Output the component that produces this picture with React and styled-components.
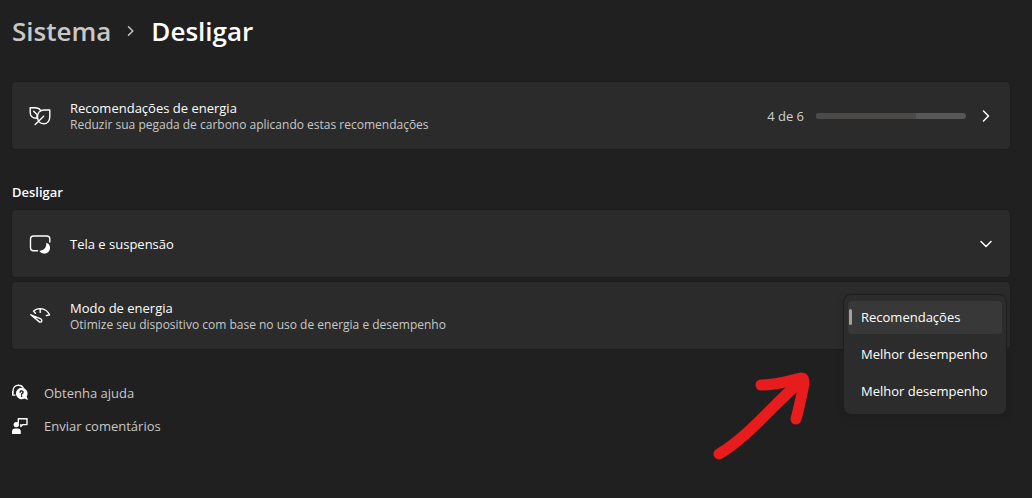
import React from "react"
import styled, { createGlobalStyle } from "styled-components"

const App = () => (
  <>
    <GlobalStyle />
    <Page>
      <Breadcrumb aria-label="Breadcrumb">
        <ParentLink href="#sistema">Sistema</ParentLink>
        <Chevron width="8" height="12" viewBox="0 0 8 12" $color="#c4c4c4">
          <path d="M1.500 1.700 5.800 6 1.500 10.300" />
        </Chevron>
        <Title>Desligar</Title>
      </Breadcrumb>

      <CardButton type="button">
        <LeafIcon />
        <CardText>
          <CardTitle>Recomendações de energia</CardTitle>
          <CardCaption>
            Reduzir sua pegada de carbono aplicando estas recomendações
          </CardCaption>
        </CardText>
        <Count>4 de 6</Count>
        <Track>
          <Fill style={{ width: `${(4 / 6) * 100}%` }} />
        </Track>
        <Chevron width="12" height="12" viewBox="0 0 12 12" $color="#ffffff">
          <path d="M3.500 1 8.500 6 3.500 11" />
        </Chevron>
      </CardButton>

      <SectionTitle>Desligar</SectionTitle>
      <CardList>
        <CardButton type="button" aria-expanded="false">
          <ScreenIcon />
          <CardText>
            <CardTitle>Tela e suspensão</CardTitle>
          </CardText>
          <Chevron width="12" height="12" viewBox="0 0 12 12" $color="#ffffff">
            <path d="M1 3.500 6 8.500 11 3.500" />
          </Chevron>
        </CardButton>
        <Card>
          <GaugeIcon />
          <CardText>
            <CardTitle id="power-mode">Modo de energia</CardTitle>
            <CardCaption>
              Otimize seu dispositivo com base no uso de energia e desempenho
            </CardCaption>
          </CardText>
          <Menu role="listbox" aria-labelledby="power-mode">
            <MenuItem type="button" role="option" aria-selected="true" $selected>
              Recomendações
            </MenuItem>
            <MenuItem type="button" role="option" aria-selected="false">
              Melhor desempenho
            </MenuItem>
            <MenuItem type="button" role="option" aria-selected="false">
              Melhor desempenho
            </MenuItem>
            <Arrow width="98" height="90" viewBox="0 0 98 90" aria-hidden="true">
              <path d="M6 83C36 65 60 34 90 8M48 14C64 14 75 10 88 7C92 7 91 12 90 18C88 26 87 34 83 48" />
            </Arrow>
          </Menu>
        </Card>
      </CardList>

      <Links>
        <HelpLink href="#ajuda">
          <HelpIcon />
          Obtenha ajuda
        </HelpLink>
        <HelpLink href="#comentarios">
          <FeedbackIcon />
          Enviar comentários
        </HelpLink>
      </Links>
    </Page>
  </>
)

export default App

const LeafIcon = () => (
  <Icon width="22" height="20" viewBox="0 0 22 20">
    <path d="M7.500 12.300C3.500 12.200 1.200 9.800 1.200 6.300V1.700H6c2.700 0 4.400.8 5.300 2.500" />
    <path d="M4.700 5.200 8 8.400V12" />
    <path d="M6.200 18.600 14.700 10.200" />
    <path d="M9.400 14.800C8.800 13.700 8.500 12.400 8.500 11c0-4.200 2.600-7 6.700-7h5.600v6.500c0 4.400-2.500 7.300-6 7.300-2 0-3.600-.6-4.800-1.900" />
  </Icon>
)

const ScreenIcon = () => (
  <Icon width="22" height="20" viewBox="0 0 22 20">
    <path d="M8.500 16.800H4.500a3 3 0 0 1-3-3V5a3 3 0 0 1 3-3h13.300a3 3 0 0 1 3 3V8" />
    <path
      d="M17.300 8.800c2.300.8 3.700 2.500 3.700 5 0 3-2.200 5.800-5.200 5.800-2.200 0-4.500-.9-5.400-2.900 4 .2 7.300-2.900 6.900-7.900Z"
      fill="#fff"
      stroke="none"
    />
  </Icon>
)

const GaugeIcon = () => (
  <Icon width="22" height="20" viewBox="0 0 22 20">
    <path d="M4.500 5C10 .9 17.200 2.300 20.600 8.800M11.200 3v3.400M20.600 8.800l-3.300.8M4.500 5l1.900 2.200" />
    <path d="M1.800 8.800 11.800 12.800c1.600.9 1.200 3.400-.6 3.300-.6 0-1-.3-1.400-.7Z" />
  </Icon>
)

const HelpIcon = () => (
  <Icon width="18" height="18" viewBox="0 0 18 18">
    <path d="M1 9.500V7C1 3.500 3.300 1.200 6.500 1.200c2 0 3.600.8 4.600 2.200M.7 7.500v3.600h2.300" />
    <path
      d="M9.600 3.800a5.700 5.700 0 1 0 2.800 10.700L16 16l-1.300-3.600A5.700 5.700 0 0 0 9.600 3.800Z"
      fill="#fff"
      stroke="none"
    />
    <path d="M8.100 8.200c.1-1.900 3.100-1.800 3 .1 0 1.100-1.500 1.100-1.500 2.300M9.600 11.900v.6" stroke="#202020" />
  </Icon>
)

const FeedbackIcon = () => (
  <Icon width="18" height="18" viewBox="0 0 18 18">
    <path d="M6.300 5.600V1.700h8.700v5.900h-4.200l-2 1.800V7.600" />
    <g fill="#fff" stroke="none">
      <circle cx="4.300" cy="7.600" r="2.700" />
      <path d="M0 17v-2.400c0-2 1.300-3.200 3.200-3.200h2.400c1.900 0 3.200 1.200 3.200 3.200V17Z" />
    </g>
  </Icon>
)

const GlobalStyle = createGlobalStyle`
  * {
    box-sizing: border-box;
  }

  body {
    margin: 0;
    background: #202020;
    color: #ffffff;
    font-family: "Open Sans", "Noto Sans", sans-serif;
    font-size: 13px;
  }
`

const Page = styled.main`
  padding: 10px 22px 40px 12px;
`

const Breadcrumb = styled.nav`
  display: flex;
  align-items: center;
  gap: 16px;
  height: 42px;
  margin-bottom: 30px;
  font-size: 26px;
  font-weight: 600;
`

const ParentLink = styled.a`
  color: #c8c8c8;
  text-decoration: none;
`

const Title = styled.h1`
  margin: 0;
  font-size: inherit;
  font-weight: inherit;
`

const Chevron = styled.svg`
  flex: none;
  fill: none;
  stroke: ${props => props.$color};
  stroke-width: 1.5;
  stroke-linecap: round;
  stroke-linejoin: round;
`

const Card = styled.div`
  position: relative;
  display: flex;
  align-items: center;
  width: 100%;
  min-height: 67px;
  padding: 0 18px 0 17px;
  border: 0;
  border-radius: 4px;
  background: #2b2b2b;
  box-shadow: 0 0 0 1px #1d1d1d;
  color: inherit;
  font: inherit;
  text-align: left;
`

const CardButton = styled(Card).attrs({ as: "button" })``

const CardList = styled.div`
  display: grid;
  gap: 5px;
`

const Icon = styled.svg`
  flex: none;
  fill: none;
  stroke: #ffffff;
  stroke-width: 1.4;
  stroke-linecap: round;
  stroke-linejoin: round;
`

const CardText = styled.span`
  display: flex;
  flex: 1;
  flex-direction: column;
  margin-left: 19px;
`

const CardTitle = styled.span`
  line-height: 18px;
`

const CardCaption = styled.span`
  color: #c8c8c8;
  font-size: 12px;
  line-height: 16px;
`

const Count = styled.span`
  color: #cfcfcf;
`

const Track = styled.span`
  width: 150px;
  height: 6px;
  margin: 0 14px 0 12px;
  overflow: hidden;
  border-radius: 3px;
  background: #575757;
`

const Fill = styled.span`
  display: block;
  height: 100%;
  background: #4b4a48;
`

const SectionTitle = styled.h2`
  margin: 33px 0 8px;
  font-size: 13px;
  font-weight: 600;
  line-height: 20px;
`

const Menu = styled.div`
  position: absolute;
  top: 12px;
  right: 3px;
  display: grid;
  gap: 4px;
  width: 164px;
  padding: 6px 4px;
  border: 1px solid #1e1e1e;
  border-radius: 8px;
  background: #2c2c2c;
  box-shadow: 0 4px 8px rgba(0, 0, 0, 0.1);
`

const MenuItem = styled.button`
  display: flex;
  align-items: center;
  height: 33px;
  padding: 0 12px 2px 0;
  border: 0;
  border-radius: 4px;
  background: ${props => (props.$selected ? "#383838" : "transparent")};
  color: #ffffff;
  font: inherit;
  white-space: nowrap;

  &::before {
    content: "";
    width: 3px;
    height: 16px;
    margin: 0 9px 0 1px;
    border-radius: 2px;
    background: ${props => (props.$selected ? "#a5a29c" : "transparent")};
  }
`

const Arrow = styled.svg`
  position: absolute;
  right: calc(100% + 33px);
  bottom: -47px;
  fill: none;
  stroke: #e81c1c;
  stroke-width: 11;
  stroke-linecap: round;
  stroke-linejoin: round;
`

const Links = styled.div`
  display: grid;
  justify-items: start;
  gap: 13px;
  margin-top: 34px;
`

const HelpLink = styled.a`
  display: flex;
  align-items: center;
  gap: 14px;
  color: #c8c8c8;
  line-height: 20px;
  text-decoration: none;
`
